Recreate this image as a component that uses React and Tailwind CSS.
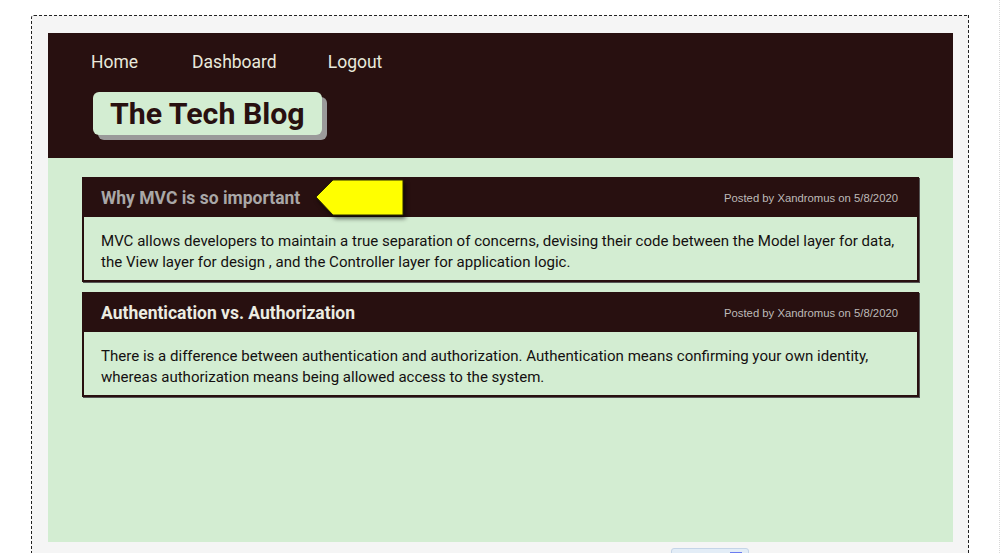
const posts = [
  {
    title: "Why MVC is so important",
    author: "Xandromus",
    date: "5/8/2020",
    body: "MVC allows developers to maintain a true separation of concerns, devising their code between the Model layer for data, the View layer for design , and the Controller layer for application logic.",
    dim: true,
    arrow: true,
  },
  {
    title: "Authentication vs. Authorization",
    author: "Xandromus",
    date: "5/8/2020",
    body: "There is a difference between authentication and authorization. Authentication means confirming your own identity, whereas authorization means being allowed access to the system.",
  },
]

function Arrow() {
  return (
    <svg
      className="absolute left-[231px] top-[0px] drop-shadow-[2px_3px_2px_rgba(0,0,0,0.6)]"
      width="90"
      height="38"
      viewBox="0 0 90 38"
    >
      <polygon points="1,18 18,1 88,1 88,36 18,36" fill="#ffff00" stroke="#2a2a00" strokeWidth="1" />
    </svg>
  )
}

function PostCard({ post }) {
  return (
    <article className="relative border-2 border-[#281010] bg-[#d3edd2] shadow-[1px_1px_0_#555]">
      <header className="flex h-[38px] items-center justify-between bg-[#281010] pl-[17px] pr-[19px]">
        <h2
          className={
            "text-[17.5px] font-bold " + (post.dim ? "text-[#a9a7a7]" : "text-[#ecece2]")
          }
        >
          {post.title}
        </h2>
        <p className="font-['Liberation_Sans',sans-serif] text-[11.3px] text-[#bdbab8]">
          Posted by {post.author} on {post.date}
        </p>
      </header>
      <p className="pl-[17px] pr-[12px] pt-[14px] pb-[7px] text-[15.05px] leading-[21px] text-[#141010]">
        {post.body}
      </p>
      {post.arrow && <Arrow />}
    </article>
  )
}

export default function App() {
  return (
    <div className="relative h-[553px] overflow-hidden bg-white font-['Roboto',sans-serif]">
      <div className="ml-[31px] mt-[15px] w-[938px] rounded-tl-[3px] border border-dashed border-[#222] bg-[#f5f5f5] pl-[16px] pr-[15px] pt-[17px]">
        <header className="bg-[#281010] pb-[23px] pt-[19px]">
          <nav className="flex pl-[43px] text-[17.5px] leading-[21px] text-[#e9e9dc]">
            <a className="mr-[54px]">Home</a>
            <a className="mr-[51px]">Dashboard</a>
            <a>Logout</a>
          </nav>
          <div className="ml-[45px] mt-[19px] inline-flex h-[43px] items-center rounded-[6px] bg-[#d3edd2] px-[17px] shadow-[5px_5px_0_#9a9a9a]">
            <h1 className="text-[30.3px] font-bold text-[#281010]">The Tech Blog</h1>
          </div>
        </header>
        <main className="flex h-[384px] flex-col gap-[10px] bg-[#d3edd2] px-[34px] pt-[19px]">
          {posts.map((post) => (
            <PostCard key={post.title} post={post} />
          ))}
        </main>
        <div className="h-[30px]" />
      </div>
      <div className="absolute left-[671px] top-[548px] h-[14px] w-[78px] rounded-[3px] border border-[#c5d5e8] bg-[#e3edf7]">
        <div className="ml-[58px] mt-[3px] h-[8px] w-[12px] bg-[#6b7cf0]" />
      </div>
      <div className="absolute right-[1px] top-0 h-full border-l border-dotted border-[#d8d8d8]" />
    </div>
  )
}
